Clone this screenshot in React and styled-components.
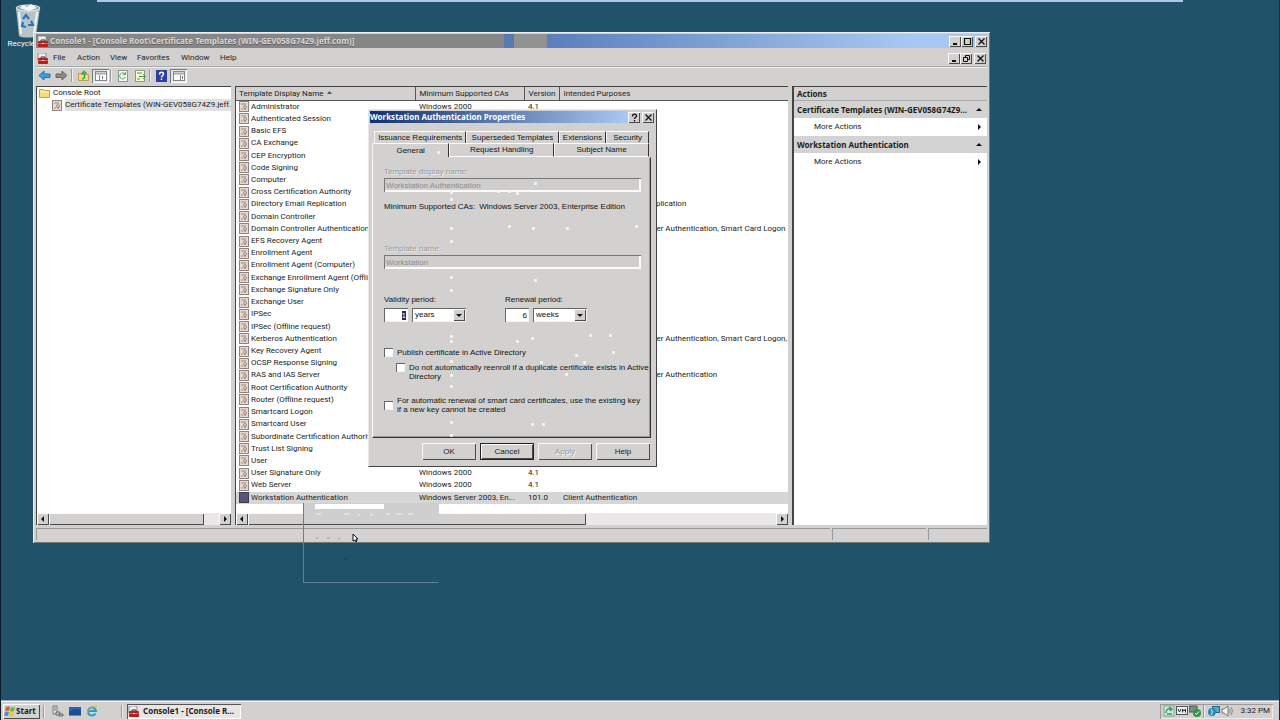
import React from "react";
import styled, { createGlobalStyle, css } from "styled-components";

const GlobalStyle = createGlobalStyle`
    * {
        box-sizing: border-box;
    }

    body {
        margin: 0;
        background: #20526a;
        overflow: hidden;
    }

    button,
    input,
    select {
        font: inherit;
        color: inherit;
        margin: 0;
        padding: 0;
        border: 0;
        border-radius: 0;
        outline: 0;
        background: none;
    }
`;

const face = "#d2d1d0";
const boldFont = `"Noto Sans", "Open Sans", sans-serif`;

const raised = css`
    background: ${face};
    box-shadow: inset 1px 1px #fafafa, inset -1px -1px #4a4a4a;
`;

const sunken = css`
    box-shadow: inset 1px 1px #666, inset -1px -1px #f6f6f6;
`;

const Desktop = styled.main`
    position: relative;
    display: flex;
    flex-direction: column;
    height: 100vh;
    min-height: 640px;
    background: #20526a;
    border-left: 1px solid #0b1c26;
    border-right: 1px solid #14303f;
    font: 8px/12px Roboto, "Noto Sans", sans-serif;
    color: #1c1c1c;
`;

const TopEdge = styled.div`
    height: 2px;
    margin: 0 96px;
    background: #a9c9ec;
`;

const Workspace = styled.div`
    position: relative;
    flex: 1;
    min-height: 0;
`;

const BinShortcut = styled.a`
    position: absolute;
    top: 0;
    left: 5px;
    width: 44px;
    display: flex;
    flex-direction: column;
    align-items: center;
    color: #fff;
    text-decoration: none;
    white-space: nowrap;
`;

const ConsoleWindow = styled.section`
    position: absolute;
    top: 30px;
    left: 32px;
    right: 289px;
    bottom: 157px;
    display: flex;
    flex-direction: column;
    padding: 2px 3px 3px;
    background: ${face};
    box-shadow: inset 1px 1px #eee, inset -1px -1px #777;
`;

const TitleBar = styled.header`
    display: flex;
    align-items: center;
    gap: 1px;
    height: 14px;
    padding-left: 1px;
    background: linear-gradient(
        90deg,
        #868686 0 468px,
        #5879b2 468px 478px,
        #929292 478px 511px,
        #5b7fbb 511px,
        #a6c8f2 92%
    );
`;

const WindowTitle = styled.h1`
    flex: 1;
    margin: 0;
    font: 700 8px/12px ${boldFont};
    color: #d6d6d6;
    white-space: nowrap;
    text-shadow: 0 1px #5e5e5e;
`;

const CaptionButtons = styled.div`
    display: flex;
    margin-left: auto;

    button:last-child {
        margin-left: 2px;
    }
`;

const CaptionButton = styled.button`
    ${raised}
    display: grid;
    place-items: center;
    width: 12px;
    height: 11px;
    color: #111;
`;

const MenuBar = styled.nav`
    display: flex;
    align-items: center;
    height: 19px;
    padding: 2px 1px 0;
    border-bottom: 1px solid #aaa;
    box-shadow: 0 1px #eee;

    > svg {
        margin-right: 4px;
    }
`;

const MenuItem = styled.button`
    width: ${({ $width }) => $width}px;
    text-align: left;
`;

const Toolbar = styled.div`
    display: flex;
    align-items: center;
    height: 19px;
    padding-bottom: 2px;
`;

const ToolButton = styled.button`
    display: grid;
    place-items: center;
    width: 17px;
    height: 14px;
    ${({ $pressed }) =>
        $pressed &&
        css`
            background: #e8e8e8;
            box-shadow: inset 1px 1px #777, inset -1px -1px #fff;
        `}
`;

const Divider = styled.span`
    width: 2px;
    height: 13px;
    margin: 0 2px 0 1px;
    border-left: 1px solid #999;
    border-right: 1px solid #eee;
`;

const Panes = styled.div`
    display: flex;
    flex: 1;
    min-height: 0;
    gap: 4px;
`;

const Pane = styled.div`
    display: flex;
    flex-direction: column;
    min-width: 0;
    background: #fff;
    border-top: 1px solid #444;
    border-left: 1px solid #444;
    overflow: hidden;
`;

const TreePane = styled(Pane)`
    flex: 0 0 195px;
`;

const ListPane = styled(Pane)`
    flex: 1;
`;

const ActionsPane = styled(Pane)`
    flex: 0 0 195px;
    border-left-width: 2px;
`;

const Tree = styled.ul`
    flex: 1;
    margin: 0;
    padding: 0 0 0 2px;
    list-style: none;
`;

const TreeItem = styled.li`
    display: flex;
    align-items: center;
    gap: 3px;
    height: 12px;
    padding-left: ${({ $level }) => $level * 13}px;
    white-space: nowrap;

    svg {
        flex: none;
    }

    span {
        flex: 1;
        background: ${({ $selected }) => ($selected ? "#e0e0e0" : "none")};
    }
`;

const ListBody = styled.div`
    flex: 1;
    min-height: 0;
    padding-bottom: 9px;
`;

const TemplateTable = styled.table`
    width: 100%;
    height: 100%;
    table-layout: fixed;
    border-collapse: collapse;
    border-spacing: 0;

    th {
        height: 13px;
        padding: 0 4px;
        background: ${face};
        border-bottom: 1px solid #555;
        border-right: 1px solid #555;
        font-weight: 400;
        line-height: 11px;
        text-align: left;
        white-space: nowrap;
    }

    th:last-child {
        border-right: 0;
    }

    td {
        padding: 0 0 0 4px;
        line-height: 12px;
        white-space: nowrap;
        overflow: hidden;
    }

    th:first-child,
    td:first-child {
        padding-left: 3px;
    }
`;

const TemplateRow = styled.tr`
    background: ${({ $selected }) => ($selected ? "#d6d6d6" : "none")};
`;

const TemplateName = styled.span`
    display: flex;
    align-items: center;
    gap: 2px;

    svg {
        flex: none;
    }
`;

const ScrollBar = styled.div`
    display: flex;
    height: 12px;
    background: #e9e7e7;
`;

const ScrollButton = styled.button`
    ${raised}
    display: grid;
    place-items: center;
    width: 12px;
`;

const ScrollThumb = styled.span`
    ${raised}
    width: ${({ $size }) => $size};
    margin-right: auto;
`;

const ActionsHeading = styled.h2`
    height: 14px;
    margin: 0;
    padding-left: 3px;
    background: ${face};
    border-bottom: 1px solid #aaa;
    font: 700 8px/13px ${boldFont};
`;

const ActionsGroup = styled.button`
    display: flex;
    align-items: center;
    justify-content: space-between;
    height: 17px;
    padding: 0 5px 0 3px;
    background: #d3d3d3;
    font: 700 8px/12px ${boldFont};
    white-space: nowrap;
`;

const ActionsLink = styled(ActionsGroup)`
    height: 18px;
    padding-left: 20px;
    background: #fff;
    font: inherit;
`;

const StatusBar = styled.footer`
    display: grid;
    grid-template-columns: 1fr 94px 59px;
    gap: 2px;
    height: 15px;
    padding-top: 3px;
`;

const StatusCell = styled.span`
    border-top: 1px solid #999;
    border-left: 1px solid #999;
    background: #d5d3d1;
`;

const Dialog = styled.section`
    position: absolute;
    top: 107px;
    left: 367px;
    width: 289px;
    padding: 1px 1px 2px;
    background: ${face};
    border: 1px solid;
    border-color: #e8e8e8 #444 #444 #e8e8e8;
    font: 8px/10px "Liberation Sans", Arial, sans-serif;
    color: #111;
`;

const DialogTitle = styled.header`
    display: flex;
    align-items: center;
    height: 12px;
    padding-right: 1px;
    background: linear-gradient(90deg, #123070, #a6c8f2 90%, ${face} 92%);

    h2 {
        margin: 0;
        font: 700 8px/12px ${boldFont};
        color: #fff;
        white-space: nowrap;
    }
`;

const TabRow = styled.div`
    display: flex;
    margin: ${({ $back }) => ($back ? "8px 6px 0 4px" : "0 6px 0 2px")};
    height: ${({ $back }) => ($back ? 12 : 14)}px;
`;

const Tab = styled.button`
    flex: ${({ $width }) => $width} 1 0;
    border-top: 1px solid #fff;
    border-left: 1px solid #f4f4f4;
    border-right: 1px solid #333;
    border-bottom: ${({ $flat }) => ($flat ? "1px solid #fff" : "0")};
    text-align: center;
    white-space: nowrap;
`;

const TabPanel = styled.div`
    margin: 0 4px 0 2px;
    padding: 9px 9px 23px 11px;
    border: 1px solid;
    border-color: transparent #333 #333 #fff;
    box-shadow: inset -1px -1px #999;
`;

const Field = styled.div`
    display: flex;
    flex-direction: column;
    gap: 1px;
    color: #999;

    label {
        text-shadow: 1px 1px #eee;
    }
`;

const TextBox = styled.input`
    ${sunken}
    width: ${({ $width }) => $width || "100%"};
    height: 14px;
    padding: 0 2px;
    background: ${({ disabled }) => (disabled ? "#cfcecd" : "#fff")};
    color: ${({ disabled }) => (disabled ? "#8c8c8c" : "#111")};
    text-align: ${({ $align }) => $align || "left"};

    &::selection {
        background: #14286a;
        color: #fff;
    }
`;

const ReadOnlyBox = styled(TextBox)`
    box-shadow: inset 1px 1px #777, inset -2px -2px #fbfbfb;
`;

const Supported = styled.p`
    display: flex;
    gap: 4px;
    margin: 10px 0 32px;
    white-space: nowrap;
`;

const Periods = styled.div`
    display: grid;
    grid-template-columns: 121px 1fr;
    margin: 26px 0;
`;

const Period = styled.div`
    display: flex;
    flex-wrap: wrap;
    gap: 3px 4px;

    label {
        width: 100%;
    }
`;

const Combo = styled.span`
    ${sunken}
    display: grid;
    grid-template-columns: 1fr 12px;
    width: 54px;
    height: 14px;
    padding: 1px;
    background: #fff;

    select {
        grid-area: 1 / 1 / 2 / 3;
        appearance: none;
        padding-left: 2px;
    }

    span {
        ${raised}
        grid-area: 1 / 2;
        display: grid;
        place-items: center;
        pointer-events: none;
    }
`;

const Option = styled.label`
    display: flex;
    align-items: ${({ $middle }) => ($middle ? "center" : "flex-start")};
    gap: 4px;
    margin: ${({ $gap }) => $gap || 0}px 0 0 ${({ $indent }) => $indent || 0}px;
    line-height: 9px;

    input {
        ${sunken}
        flex: none;
        appearance: none;
        width: 9px;
        height: 9px;
        background: #fff;
    }

    span {
        white-space: nowrap;
    }
`;

const DialogButtons = styled.div`
    display: flex;
    justify-content: flex-end;
    gap: 4px;
    padding: 5px 5px 4px;
`;

const PushButton = styled.button`
    ${raised}
    width: 54px;
    height: 17px;
    border: ${({ $focus }) => ($focus ? "1px solid #222" : "0")};
    color: ${({ disabled }) => (disabled ? "#999" : "#222")};
    text-shadow: ${({ disabled }) => (disabled ? "1px 1px #fff" : "none")};
`;

const Specks = styled.svg`
    position: absolute;
    inset: 0;
    pointer-events: none;
    fill: #f4f4f4;
`;

const MenuGhost = styled.div`
    position: absolute;
    top: 501px;
    left: 302px;
    width: 136px;
    height: 80px;
    border: 1px solid #5f8191;
    border-top: 0;
    border-right-color: transparent;
    pointer-events: none;
    background: linear-gradient(#cfcfcf 0 21px, transparent 21px);

    &::before {
        content: "";
        display: block;
        height: 5px;
        width: 69px;
        margin: 1px 0 0 11px;
        background: #fff;
    }

    svg {
        display: block;
    }
`;

const TaskBar = styled.footer`
    display: flex;
    align-items: center;
    gap: 2px;
    height: 20px;
    padding: 2px 6px 1px 2px;
    background: ${face};
    border-top: 1px solid #9fb2bc;
    box-shadow: inset 0 1px #f0f0f0;
`;

const StartButton = styled.button`
    ${raised}
    display: flex;
    align-items: center;
    height: 15px;
    width: 37px;
    padding-left: 1px;
    font: 700 8px/12px ${boldFont};
`;

const QuickLaunch = styled.div`
    display: flex;
    gap: 5px;
    width: 69px;
    padding-left: 3px;
`;

const TaskButton = styled.button`
    display: flex;
    align-items: center;
    gap: 3px;
    width: 114px;
    height: 15px;
    padding-left: 1px;
    background: #e7e6e5;
    box-shadow: inset 1px 1px #555, inset -1px -1px #fff;
    font: 700 8px/12px ${boldFont};
    white-space: nowrap;
`;

const Tray = styled.div`
    display: flex;
    align-items: center;
    gap: 1px;
    height: 15px;
    width: 113px;
    margin-left: auto;
    padding: 0 3px;
    box-shadow: inset 1px 1px #999, inset -1px -1px #eee;

    time {
        margin-left: auto;
    }
`;

const ToolboxIcon = () => (
    <svg width="12" height="11" viewBox="0 0 12 11">
        <rect x="1" width="8" height="7" fill="#eceff2" stroke="#8b9196" />
        <path d="M4 5V4h4v1" fill="none" stroke="#5a1714" />
        <rect x="1" y="5" width="10" height="6" rx="1" fill="#b3211f" />
        <path d="M1 7.500h10" stroke="#d9655f" />
        <rect x="5" y="7" width="2" height="1" fill="#f3e4e0" />
    </svg>
);

const CertIcon = ({ selected }) => (
    <svg width="10" height="11" viewBox="0 0 10 11">
        <rect x=".5" y=".5" width="9" height="10" fill={selected ? "#5a5478" : "#e6dad3"} stroke={selected ? "#3f3b56" : "#8e827c"} />
        {!selected && (
            <g fill="none" stroke="#9a8a82">
                <path d="M2 3h5M2 8h2" />
                <circle cx="6" cy="6" r="1.500" />
                <path d="M6 7v2" stroke="#a2654d" />
            </g>
        )}
    </svg>
);

const FolderIcon = () => (
    <svg width="11" height="10" viewBox="0 0 11 10">
        <path d="M.5 1.500h4l1 1h5v7h-10z" fill="#f4dc7c" stroke="#c2a043" />
        <path d="M1 4h9" stroke="#fff6c4" />
    </svg>
);

const Arrow = ({ dir }) => {
    const paths = {
        left: "M4 0v6L1 3z",
        right: "M2 0v6l3-3z",
        up: "M0 4h6L3 1z",
        down: "M0 2h6L3 5z",
    };
    return (
        <svg width="6" height="6" viewBox="0 0 6 6">
            <path d={paths[dir]} fill="#111" />
        </svg>
    );
};

const SortMark = styled.svg`
    margin-left: 4px;
    fill: #555;
`;

const BackArrow = ({ color, edge, flip }) => (
    <svg width="13" height="11" viewBox="0 0 13 11">
        <path
            d="M1 5.500 6 1v3h6v3.500H6V10z"
            fill={color}
            stroke={edge}
            transform={flip ? "matrix(-1 0 0 1 13 0)" : undefined}
        />
    </svg>
);

const UpFolderIcon = () => (
    <svg width="12" height="12" viewBox="0 0 12 12">
        <path d="M.5 3.500h4l1 1h5v6H.5z" fill="#f0dd78" stroke="#b9a14b" />
        <path d="M4 9C7 9 7 6 6 3M3.500 4.500 6 1.500l2.500 2" fill="none" stroke="#3d9a3c" strokeWidth="1.400" />
    </svg>
);

const PaneIcon = ({ flip }) => (
    <svg width="12" height="10" viewBox="0 0 12 10">
        <rect x=".5" y=".5" width="11" height="9" fill="#fafafa" stroke="#888" />
        <path d="M1 2.500h10" stroke="#aaa" strokeWidth="2" />
        <path d={flip ? "M7.500 4v5" : "M4.500 4v5"} stroke="#888" />
        <path d={flip ? "M9.500 5v3" : "M7.500 5v3"} stroke="#6c7d96" />
    </svg>
);

const PageIcon = ({ exporting }) => (
    <svg width="12" height="12" viewBox="0 0 12 12">
        <rect x="1.500" y=".5" width="9" height="11" fill={exporting ? "#fbf7d6" : "#f3f8f4"} stroke="#8a9a90" />
        {exporting ? (
            <path d="M3 3h5M3 9h3M5 6.500h6M9 4l2.500 2.500L9 9" fill="none" stroke="#37a03c" />
        ) : (
            <path d="M8 4a3 3 0 1 0 .5 3M8.500 2v2.500H6" fill="none" stroke="#4faa5e" />
        )}
    </svg>
);

const HelpIcon = () => (
    <svg width="11" height="12" viewBox="0 0 11 12">
        <rect width="11" height="12" fill="#2a3fa0" />
        <path d="M3.500 4.500c0-3 4-3 4-.5 0 1.500-2 1.500-2 3.500M5.500 8.500V10" fill="none" stroke="#fff" strokeWidth="1.500" />
    </svg>
);

const CaptionGlyph = ({ kind }) => {
    const shapes = {
        min: <path d="M2 7h4" strokeWidth="2" />,
        max: <path d="M1 1.500h7M1.500 1v6.500h6V1" strokeWidth="1.200" />,
        restore: <path d="M3.500 3V1.500h4v4H6M1.500 3.500h4v4h-4z" />,
        close: <path d="m1.500 1.500 6 6m0-6-6 6" strokeWidth="1.300" />,
        help: <path d="M2.500 3.500c0-3 4-3 4-.5 0 1.500-2 1-2 3M4.500 7v1.500" strokeWidth="1.300" />,
    };
    return (
        <svg width="9" height="9" viewBox="0 0 9 9" fill="none" stroke="#111">
            {shapes[kind]}
        </svg>
    );
};

const BinIcon = () => (
    <svg width="26" height="36" viewBox="0 0 26 36">
        <path d="M1 6 4 34c3 2 14 2 17 0l4-28z" fill="#c6d0d5" opacity=".9" />
        <ellipse cx="13" cy="6" rx="12" ry="3" fill="#8a9ba4" stroke="#eef3f5" />
        <path d="m4 6 5-3 3 2 4-3 6 4-8 3z" fill="#f4f6f7" />
        <path d="m4 10 2 22M22 10l-3 22" stroke="#eef2f4" strokeWidth="2" />
        <path d="m8 17 3-4 3 4M16 19l2 4h-5M11 25l-4-1 1-4" fill="none" stroke="#2f6fbd" strokeWidth="2.200" />
    </svg>
);

const FlagIcon = () => (
    <svg width="12" height="12" viewBox="0 0 12 12">
        <path d="M2 2q2-1 4 0L5 6Q3 5 1 6z" fill="#dd5a2c" />
        <path d="M7 2q2 1 4 0l-1 4q-2 1-4 0z" fill="#6fb33f" />
        <path d="M1 7q2-1 4 0l-1 4q-2-1-4 0z" fill="#4d8ad8" />
        <path d="M6 7q2 1 4 0l-1 4q-2 1-4 0z" fill="#efc33a" />
    </svg>
);

const ServerIcon = () => (
    <svg width="12" height="12" viewBox="0 0 12 12">
        <path d="M1 1h4v8H1z" fill="#e3e3e3" stroke="#777" />
        <path d="M2 3h2M2 5h2" stroke="#777" />
        <path d="M4 7h4v3H4zM7 9h4v2H7z" fill="#c4c4c4" stroke="#6d6d6d" />
    </svg>
);

const DesktopIcon = () => (
    <svg width="12" height="12" viewBox="0 0 12 12">
        <rect y="2" width="12" height="8" fill="#2668b8" />
        <path d="M0 7q6-5 12-2v5H0z" fill="#1c4c92" />
        <path d="M0 10.500h12" stroke="#789" />
    </svg>
);

const ExplorerIcon = () => (
    <svg width="12" height="12" viewBox="0 0 12 12">
        <path d="M9.500 8.500A4 4 0 1 1 10 6H3" fill="none" stroke="#2a9bd0" strokeWidth="2" />
        <path d="M1 10C0 6 7 0 11 1.500" fill="none" stroke="#d8b73e" />
    </svg>
);

const TrayIcon = ({ kind }) => (
    <svg width="12" height="12" viewBox="0 0 12 12">
        {kind === "update" && (
            <>
                <rect x="1" y="1" width="10" height="10" fill="#dbe9df" stroke="#78a58a" />
                <path d="M3 8q0-5 5-4M6 2l3 2-2 2M4 9h5" fill="none" stroke="#2c9a5c" strokeWidth="1.500" />
            </>
        )}
        {kind === "vm" && (
            <>
                <rect x=".5" y="1.500" width="11" height="8" fill="#eee" stroke="#555" />
                <path d="m2 4 1.500 3L5 4M6.500 7.500V4L8 6l1.500-2v3.500" fill="none" stroke="#333" />
            </>
        )}
        {kind === "safe" && (
            <>
                <rect y="1" width="8" height="6" fill="#7b8b85" stroke="#4b5852" />
                <circle cx="8" cy="8" r="4" fill="#2c9a3c" />
                <path d="m6 8 1.500 1.500L10 6.500" fill="none" stroke="#fff" />
            </>
        )}
        {kind === "network" && (
            <>
                <rect x="4.500" y="1.500" width="7" height="6" fill="#53a6cc" stroke="#276887" />
                <circle cx="4" cy="7" r="4" fill="#2d89b5" />
                <path d="M3 4q3 3 0 6M7 10h4" fill="none" stroke="#d8eef6" />
            </>
        )}
        {kind === "sound" && (
            <>
                <path d="M1 4h2l4-3v10L3 8H1z" fill="#f2f2f2" stroke="#777" />
                <path d="M8.500 4q1.500 2 0 4M10 2q3 4 0 8" fill="none" stroke="#888" />
            </>
        )}
    </svg>
);

const WIN2000 = "Windows 2000";
const WIN2003 = "Windows Server 2003, En...";

const templates = [
    { name: "Administrator", ca: WIN2000, version: "4.1" },
    { name: "Authenticated Session" },
    { name: "Basic EFS" },
    { name: "CA Exchange" },
    { name: "CEP Encryption" },
    { name: "Code Signing" },
    { name: "Computer" },
    { name: "Cross Certification Authority" },
    { name: "Directory Email Replication", purpose: "Directory Service Email Replication" },
    { name: "Domain Controller" },
    { name: "Domain Controller Authentication", purpose: "Client Authentication, Server Authentication, Smart Card Logon" },
    { name: "EFS Recovery Agent" },
    { name: "Enrollment Agent" },
    { name: "Enrollment Agent (Computer)" },
    { name: "Exchange Enrollment Agent (Offline request)" },
    { name: "Exchange Signature Only" },
    { name: "Exchange User" },
    { name: "IPSec" },
    { name: "IPSec (Offline request)" },
    { name: "Kerberos Authentication", purpose: "Client Authentication, Server Authentication, Smart Card Logon, " },
    { name: "Key Recovery Agent" },
    { name: "OCSP Response Signing" },
    { name: "RAS and IAS Server", purpose: "Client Authentication, Server Authentication" },
    { name: "Root Certification Authority" },
    { name: "Router (Offline request)" },
    { name: "Smartcard Logon" },
    { name: "Smartcard User" },
    { name: "Subordinate Certification Authority" },
    { name: "Trust List Signing" },
    { name: "User" },
    { name: "User Signature Only", ca: WIN2000, version: "4.1" },
    { name: "Web Server", ca: WIN2000, version: "4.1" },
    { name: "Workstation Authentication", ca: WIN2003, version: "101.0", purpose: "Client Authentication" },
];

const menus = [
    ["File", 24],
    ["Action", 33],
    ["View", 27],
    ["Favorites", 44],
    ["Window", 39],
    ["Help", 30],
];

const specks = [
    [70, 43], [83, 83], [83, 90], [83, 119], [83, 132], [83, 168], [83, 181],
    [83, 206], [83, 227], [83, 232], [83, 252], [83, 266], [83, 277], [83, 313], [83, 326],
    [130, 82], [141, 82], [149, 84], [167, 74], [141, 117], [165, 119], [199, 119],
    [268, 117], [167, 171], [149, 232], [164, 229], [222, 226], [242, 226], [208, 246],
    [245, 243], [173, 253], [216, 253], [198, 265], [164, 315], [175, 315],
];

const Scroller = ({ size }) => (
    <ScrollBar>
        <ScrollButton type="button" aria-label="Scroll left">
            <Arrow dir="left" />
        </ScrollButton>
        <ScrollThumb $size={size} />
        <ScrollButton type="button" aria-label="Scroll right">
            <Arrow dir="right" />
        </ScrollButton>
    </ScrollBar>
);

const Caption = ({ kinds }) => (
    <CaptionButtons>
        {kinds.map((kind) => (
            <CaptionButton key={kind} type="button" aria-label={kind}>
                <CaptionGlyph kind={kind} />
            </CaptionButton>
        ))}
    </CaptionButtons>
);

const TemplateList = () => (
    <ListPane>
        <ListBody>
            <TemplateTable>
                <colgroup>
                    <col width="179" />
                    <col width="109" />
                    <col width="35" />
                    <col />
                </colgroup>
                <thead>
                    <tr>
                        <th>
                            Template Display Name
                            <SortMark width="5" height="6" viewBox="0 0 5 6">
                                <path d="M0 4h5L2.500 1z" />
                            </SortMark>
                        </th>
                        <th>Minimum Supported CAs</th>
                        <th>Version</th>
                        <th>Intended Purposes</th>
                    </tr>
                </thead>
                <tbody>
                    {templates.map(({ name, ca, version, purpose }, i) => {
                        const selected = i === templates.length - 1;
                        return (
                            <TemplateRow key={name} $selected={selected}>
                                <td>
                                    <TemplateName>
                                        <CertIcon selected={selected} />
                                        {name}
                                    </TemplateName>
                                </td>
                                <td>{ca}</td>
                                <td>{version}</td>
                                <td>{purpose}</td>
                            </TemplateRow>
                        );
                    })}
                </tbody>
            </TemplateTable>
        </ListBody>
        <Scroller size="338px" />
    </ListPane>
);

const PropertiesDialog = () => (
    <Dialog role="dialog" aria-labelledby="dialog-title">
        <DialogTitle>
            <h2 id="dialog-title">Workstation Authentication Properties</h2>
            <Caption kinds={["help", "close"]} />
        </DialogTitle>
        <TabRow $back>
            <Tab type="button" $width={93}>Issuance Requirements</Tab>
            <Tab type="button" $width={93}>Superseded Templates</Tab>
            <Tab type="button" $width={47}>Extensions</Tab>
            <Tab type="button" $width={42}>Security</Tab>
        </TabRow>
        <TabRow>
            <Tab type="button" $width={77}>General</Tab>
            <Tab type="button" $width={105} $flat>Request Handling</Tab>
            <Tab type="button" $width={95} $flat>Subject Name</Tab>
        </TabRow>
        <TabPanel>
            <Field>
                <label htmlFor="display-name">Template display name:</label>
                <ReadOnlyBox id="display-name" defaultValue="Workstation Authentication" disabled />
            </Field>
            <Supported>
                <span>Minimum Supported CAs:</span>
                <span>Windows Server 2003, Enterprise Edition</span>
            </Supported>
            <Field>
                <label htmlFor="template-name">Template name:</label>
                <ReadOnlyBox id="template-name" defaultValue="Workstation" disabled />
            </Field>
            <Periods>
                <Period>
                    <label htmlFor="validity">Validity period:</label>
                    <TextBox
                        id="validity"
                        defaultValue="1"
                        $width="24px"
                        $align="right"
                        autoFocus
                        onFocus={(e) => e.target.select()}
                    />
                    <Combo>
                        <select aria-label="Validity unit">
                            <option>years</option>
                        </select>
                        <span>
                            <Arrow dir="down" />
                        </span>
                    </Combo>
                </Period>
                <Period>
                    <label htmlFor="renewal">Renewal period:</label>
                    <TextBox id="renewal" defaultValue="6" $width="24px" $align="right" />
                    <Combo>
                        <select aria-label="Renewal unit">
                            <option>weeks</option>
                        </select>
                        <span>
                            <Arrow dir="down" />
                        </span>
                    </Combo>
                </Period>
            </Periods>
            <Option>
                <input type="checkbox" />
                <span>Publish certificate in Active Directory</span>
            </Option>
            <Option $indent={12} $gap={6}>
                <input type="checkbox" />
                <span>
                    Do not automatically reenroll if a duplicate certificate exists in Active
                    <br />
                    Directory
                </span>
            </Option>
            <Option $gap={15} $middle>
                <input type="checkbox" />
                <span>
                    For automatic renewal of smart card certificates, use the existing key
                    <br />
                    if a new key cannot be created
                </span>
            </Option>
        </TabPanel>
        <DialogButtons>
            <PushButton type="button">OK</PushButton>
            <PushButton type="button" $focus>Cancel</PushButton>
            <PushButton type="button" disabled>Apply</PushButton>
            <PushButton type="button">Help</PushButton>
        </DialogButtons>
        <Specks width="287" height="356" aria-hidden="true">
            {specks.map(([x, y]) => (
                <rect key={`${x}-${y}`} x={x - 2} y={y - 2} width="3" height="3" rx="1" />
            ))}
        </Specks>
    </Dialog>
);

const App = () => {
    return (
        <>
            <GlobalStyle />
            <Desktop>
                <TopEdge />
                <Workspace>
                    <BinShortcut href="#recycle-bin">
                        <BinIcon />
                        Recycle Bin
                    </BinShortcut>

                    <ConsoleWindow>
                        <TitleBar>
                            <ToolboxIcon />
                            <WindowTitle>
                                Console1 - [Console Root\Certificate Templates (WIN-GEV058G74Z9.jeff.com)]
                            </WindowTitle>
                            <Caption kinds={["min", "max", "close"]} />
                        </TitleBar>
                        <MenuBar>
                            <ToolboxIcon />
                            {menus.map(([label, width]) => (
                                <MenuItem key={label} type="button" $width={width}>
                                    {label}
                                </MenuItem>
                            ))}
                            <Caption kinds={["min", "restore", "close"]} />
                        </MenuBar>
                        <Toolbar>
                            <ToolButton type="button" aria-label="Back">
                                <BackArrow color="#3da0e0" edge="#1e6fae" />
                            </ToolButton>
                            <ToolButton type="button" aria-label="Forward">
                                <BackArrow color="#8a8a8a" edge="#666" flip />
                            </ToolButton>
                            <Divider />
                            <ToolButton type="button" aria-label="Up">
                                <UpFolderIcon />
                            </ToolButton>
                            <ToolButton type="button" aria-label="Console tree" $pressed>
                                <PaneIcon />
                            </ToolButton>
                            <Divider />
                            <ToolButton type="button" aria-label="Refresh">
                                <PageIcon />
                            </ToolButton>
                            <ToolButton type="button" aria-label="Export list">
                                <PageIcon exporting />
                            </ToolButton>
                            <Divider />
                            <ToolButton type="button" aria-label="Help">
                                <HelpIcon />
                            </ToolButton>
                            <ToolButton type="button" aria-label="Action pane" $pressed>
                                <PaneIcon flip />
                            </ToolButton>
                        </Toolbar>
                        <Panes>
                            <TreePane>
                                <Tree>
                                    <TreeItem $level={0}>
                                        <FolderIcon />
                                        <span>Console Root</span>
                                    </TreeItem>
                                    <TreeItem $level={1} $selected>
                                        <CertIcon />
                                        <span>Certificate Templates (WIN-GEV058G74Z9.jeff.</span>
                                    </TreeItem>
                                </Tree>
                                <Scroller size="155px" />
                            </TreePane>
                            <TemplateList />
                            <ActionsPane>
                                <ActionsHeading>Actions</ActionsHeading>
                                <ActionsGroup type="button">
                                    Certificate Templates (WIN-GEV058G74Z9...
                                    <Arrow dir="up" />
                                </ActionsGroup>
                                <ActionsLink type="button">
                                    More Actions
                                    <Arrow dir="right" />
                                </ActionsLink>
                                <ActionsGroup type="button">
                                    Workstation Authentication
                                    <Arrow dir="up" />
                                </ActionsGroup>
                                <ActionsLink type="button">
                                    More Actions
                                    <Arrow dir="right" />
                                </ActionsLink>
                            </ActionsPane>
                        </Panes>
                        <StatusBar>
                            <StatusCell />
                            <StatusCell />
                            <StatusCell />
                        </StatusBar>
                    </ConsoleWindow>

                    <MenuGhost>
                        <svg width="134" height="60" viewBox="0 0 134 60">
                            <path
                                d="M12 5h5M40 5h6M54 6h2M66 6h3M82 5h4M92 5h6M104 5h5"
                                stroke="#f0f0f0"
                            />
                            <path d="M12 29h2M23 29h3M34 30h2" stroke="#999" />
                            <path d="M49 25v7l2-1 1 2 1-1-1-2h2z" fill="#fff" stroke="#111" />
                            <path d="M41 50h1" stroke="#0c2230" />
                        </svg>
                    </MenuGhost>

                    <PropertiesDialog />
                </Workspace>

                <TaskBar>
                    <StartButton type="button">
                        <FlagIcon />
                        Start
                    </StartButton>
                    <Divider />
                    <QuickLaunch>
                        <ServerIcon />
                        <DesktopIcon />
                        <ExplorerIcon />
                    </QuickLaunch>
                    <Divider />
                    <TaskButton type="button">
                        <ToolboxIcon />
                        Console1 - [Console R...
                    </TaskButton>
                    <Tray>
                        <TrayIcon kind="update" />
                        <TrayIcon kind="vm" />
                        <TrayIcon kind="safe" />
                        <Divider />
                        <TrayIcon kind="network" />
                        <TrayIcon kind="sound" />
                        <time>3:32 PM</time>
                    </Tray>
                </TaskBar>
            </Desktop>
        </>
    );
};

export default App;
